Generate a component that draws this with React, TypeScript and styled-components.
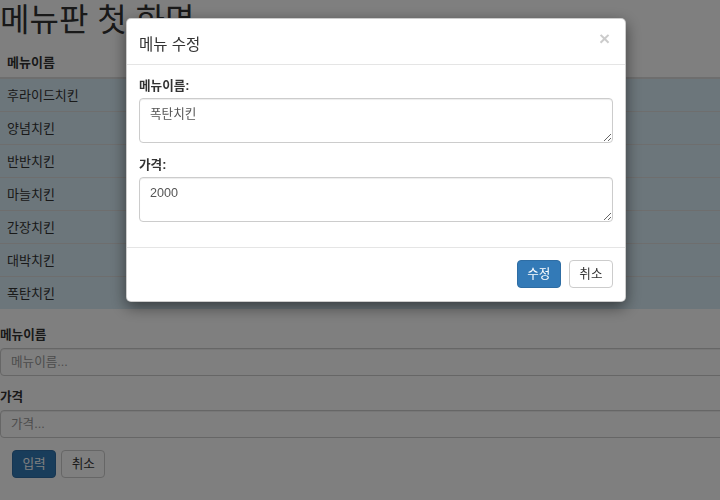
import React from "react";
import styled, { createGlobalStyle } from "styled-components";

const FONT = `"Liberation Sans", "Noto Sans CJK KR", sans-serif`;

const Global = createGlobalStyle`
  html, body { margin: 0; padding: 0; background: #fff; overflow: hidden; }
  body { font-family: ${FONT}; font-size: 12.6px; color: #333; }
  * { box-sizing: border-box; }
`;

const Page = styled.div`
  width: 720px;
  height: 500px;
`;

const Title = styled.h1`
  margin: 0 0 5px 0;
  font-size: 32px;
  font-weight: 400;
  line-height: 40px;
  color: #333;
`;

const Table = styled.table`
  width: 100%;
  border-collapse: collapse;
  font-size: 13px;
`;

const Th = styled.th`
  text-align: left;
  font-weight: 700;
  height: 33px;
  padding: 0 7px;
  border-bottom: 2px solid #ddd;
`;

const Row = styled.tr`
  background: #d9edf7;
`;

const Td = styled.td`
  height: 33px;
  padding: 0 7px;
  border-top: 1px solid #ddd;
`;

const Form = styled.div`
  margin-top: 17px;
  width: calc(100% + 8px);
`;

const Group = styled.div`
  margin-bottom: 12px;
`;

const Label = styled.label`
  display: block;
  font-weight: 700;
  line-height: 18px;
  margin-bottom: 4px;
  font-size: 12.6px;
`;

const Input = styled.input`
  display: block;
  width: 100%;
  height: 28px;
  padding: 0 10px;
  border: 1px solid #ccc;
  border-radius: 4px;
  box-shadow: inset 0 1px 1px rgba(0, 0, 0, 0.075);
  font-family: ${FONT};
  font-size: 12.6px;
  color: #555;
  &::placeholder { color: #999; }
`;

const Buttons = styled.div`
  display: flex;
  gap: 5px;
  padding-left: 12px;
  margin-top: 12px;
`;

const Button = styled.button<{ $primary?: boolean }>`
  height: 28px;
  padding: 0 9.5px;
  border-radius: 4px;
  font-family: ${FONT};
  font-size: 12.6px;
  line-height: 1;
  border: 1px solid ${(p) => (p.$primary ? "#2e6da4" : "#ccc")};
  background: ${(p) => (p.$primary ? "#337ab7" : "#fff")};
  color: ${(p) => (p.$primary ? "#fff" : "#333")};
`;

const Backdrop = styled.div`
  position: fixed;
  inset: 0;
  background: rgba(0, 0, 0, 0.5);
`;

const Modal = styled.div`
  position: fixed;
  left: 126px;
  top: 18px;
  width: 500px;
  background: #fff;
  border: 1px solid rgba(0, 0, 0, 0.2);
  border-radius: 5px;
  box-shadow: 0 5px 15px rgba(0, 0, 0, 0.5);
`;

const ModalHeader = styled.div`
  display: flex;
  align-items: center;
  justify-content: space-between;
  height: 46px;
  padding: 0 12px 0 12px;
  border-bottom: 1px solid #e5e5e5;
`;

const ModalTitle = styled.h4`
  margin: 2px 0 0 0;
  font-size: 15.5px;
  font-weight: 400;
  color: #333;
`;

const Close = styled.span`
  font-size: 19px;
  font-weight: 700;
  color: #000;
  opacity: 0.2;
  margin-top: -5px;
  margin-right: 3px;
`;

const ModalBody = styled.div`
  padding: 12px 12px 12px 12px;
`;

const FieldLabel = styled.label`
  display: block;
  font-weight: 700;
  font-size: 12.6px;
  line-height: 18px;
  margin-bottom: 3px;
`;

const Field = styled.div`
  margin-bottom: 13px;
`;

const TextArea = styled.textarea`
  display: block;
  width: 100%;
  height: 45px;
  padding: 6px 10px;
  border: 1px solid #ccc;
  border-radius: 4px;
  box-shadow: inset 0 1px 1px rgba(0, 0, 0, 0.075);
  font-family: ${FONT};
  font-size: 12.6px;
  line-height: 18px;
  color: #555;
  resize: vertical;
`;

const ModalFooter = styled.div`
  display: flex;
  justify-content: flex-end;
  gap: 8px;
  padding: 12px 12px 13px 12px;
  border-top: 1px solid #e5e5e5;
`;

const menus = ["후라이드치킨", "양념치킨", "반반치킨", "마늘치킨", "간장치킨", "대박치킨", "폭탄치킨"];

export default function App() {
  return (
    <>
      <Global />
      <Page>
        <Title>메뉴판 첫 화면</Title>
        <Table>
          <thead>
            <tr>
              <Th>메뉴이름</Th>
            </tr>
          </thead>
          <tbody>
            {menus.map((m) => (
              <Row key={m}>
                <Td>{m}</Td>
              </Row>
            ))}
          </tbody>
        </Table>
        <Form>
          <Group>
            <Label>메뉴이름</Label>
            <Input placeholder="메뉴이름..." />
          </Group>
          <Group>
            <Label>가격</Label>
            <Input placeholder="가격..." />
          </Group>
          <Buttons>
            <Button $primary>입력</Button>
            <Button>취소</Button>
          </Buttons>
        </Form>
      </Page>
      <Backdrop />
      <Modal>
        <ModalHeader>
          <ModalTitle>메뉴 수정</ModalTitle>
          <Close>×</Close>
        </ModalHeader>
        <ModalBody>
          <Field>
            <FieldLabel>메뉴이름:</FieldLabel>
            <TextArea defaultValue="폭탄치킨" />
          </Field>
          <Field>
            <FieldLabel>가격:</FieldLabel>
            <TextArea defaultValue="2000" />
          </Field>
        </ModalBody>
        <ModalFooter>
          <Button $primary>수정</Button>
          <Button>취소</Button>
        </ModalFooter>
      </Modal>
    </>
  );
}
